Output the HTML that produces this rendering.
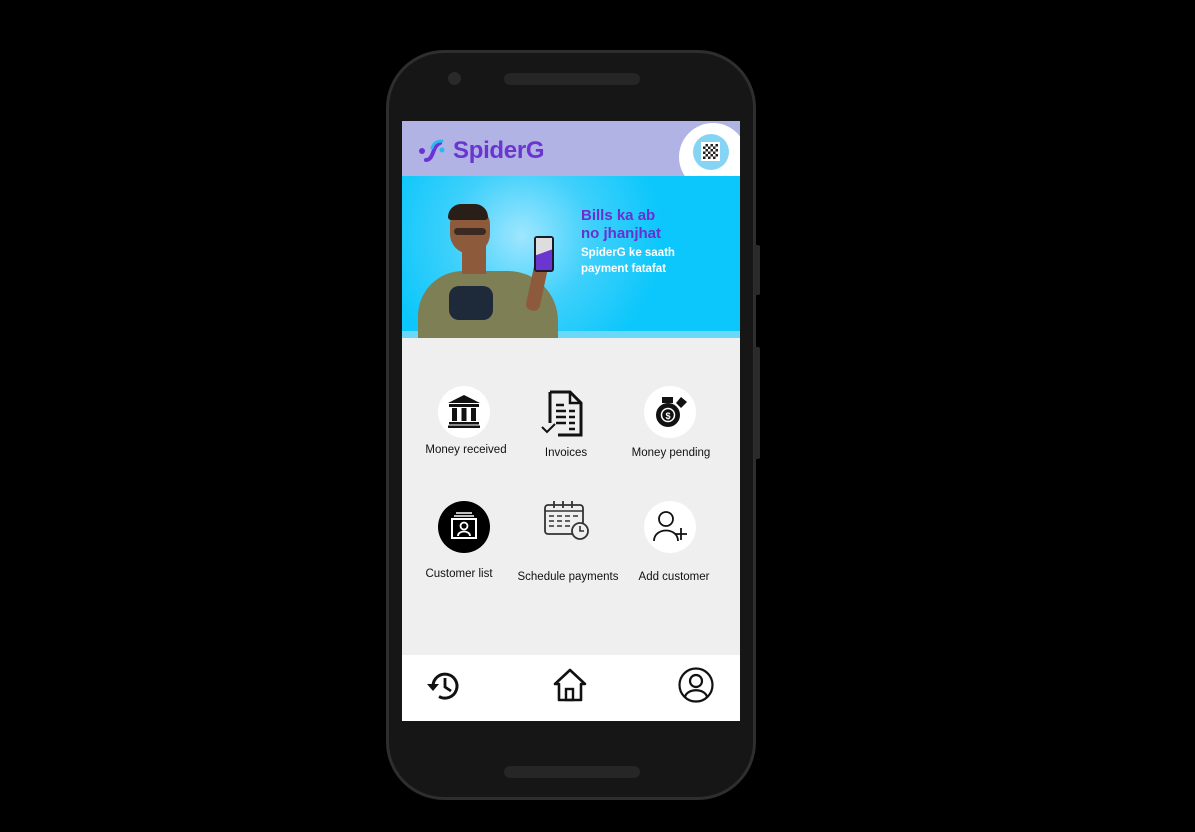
<!DOCTYPE html>
<html><head><meta charset="utf-8"><style>
*{margin:0;padding:0;box-sizing:border-box}
body{width:1195px;height:832px;background:#000;position:relative;overflow:hidden;font-family:"Liberation Sans",sans-serif}
.phone{position:absolute;left:386px;top:50px;width:370px;height:750px;background:#161616;border-radius:58px;border:3px solid #2e2e2e}
.btn{position:absolute;left:754px;width:6px;background:#2a2a2a;border-radius:0 2px 2px 0}
.screen{position:absolute;left:402px;top:121px;width:338px;height:600px;background:#efefef;overflow:hidden}
.hdr{position:absolute;left:0;top:0;width:338px;height:55px;background:#b0b3e4;overflow:hidden}
.banner{position:absolute;left:0;top:55px;width:338px;height:162px;background:radial-gradient(circle at 120px 60px,#9fe6ff 0,#3fd0fb 70px,#0cc7fb 140px);overflow:hidden}
.nav{position:absolute;left:0;top:534px;width:338px;height:66px;background:#fff}
.lbl{position:absolute;font-size:11.5px;color:#111;white-space:nowrap;transform:translateX(-50%)}
.circ{position:absolute;width:52px;height:52px;border-radius:50%;background:#fff}
</style></head><body>
<div class="phone"></div>
<div class="btn" style="top:245px;height:50px"></div>
<div class="btn" style="top:347px;height:112px"></div>
<div style="position:absolute;left:448px;top:72px;width:13px;height:13px;border-radius:50%;background:#2a2a2a"></div>
<div style="position:absolute;left:504px;top:73px;width:136px;height:12px;border-radius:6px;background:#262626"></div>
<div style="position:absolute;left:504px;top:766px;width:136px;height:12px;border-radius:6px;background:#262626"></div>
<div class="screen">
 <div class="hdr">
  <svg style="position:absolute;left:16px;top:17px" width="28" height="26" viewBox="0 0 28 26"><circle cx="4" cy="13" r="3" fill="#6b33d6"/><path d="M8 22 C16 22 14 8 22 5" stroke="#6b33d6" stroke-width="4" fill="none" stroke-linecap="round"/><path d="M14 10 C16 4 20 3 24 3" stroke="#2bb8f0" stroke-width="3" fill="none" stroke-linecap="round"/><circle cx="24" cy="12" r="2.5" fill="#2bb8f0"/></svg>
  <div style="position:absolute;left:51px;top:16px;font-size:24px;font-weight:bold;color:#6b35cf;letter-spacing:-0.3px">SpiderG</div>
  <div style="position:absolute;left:277px;top:2px;width:68px;height:68px;border-radius:50%;background:#fff"></div>
  <div style="position:absolute;left:291px;top:13px;width:36px;height:36px;border-radius:50%;background:#86d4f4"></div>
  <div style="position:absolute;left:299px;top:21px;width:19px;height:19px;background:#fff;padding:2px"><div style="width:15px;height:15px;background:conic-gradient(#222 25%,#fff 0 50%,#222 0 75%,#fff 0);background-size:5px 5px"></div></div>
 </div>
 <div class="banner">
  <div style="position:absolute;left:0;top:155px;width:338px;height:7px;background:#6ad8f6"></div>
  <div style="position:absolute;left:16px;top:95px;width:140px;height:80px;background:#7e7f55;border-radius:45px 50px 0 0"></div>
  <div style="position:absolute;left:60px;top:68px;width:24px;height:30px;background:#8d5a3c"></div>
  <div style="position:absolute;left:48px;top:32px;width:40px;height:46px;background:#8d5a3c;border-radius:16px 16px 20px 20px"></div>
  <div style="position:absolute;left:46px;top:28px;width:40px;height:16px;background:#2a1e18;border-radius:18px 18px 4px 4px"></div>
  <div style="position:absolute;left:52px;top:52px;width:32px;height:7px;background:#3a2a22;border-radius:4px"></div>
  <div style="position:absolute;left:47px;top:110px;width:44px;height:34px;background:#1e2a3a;border-radius:10px"></div>
  <div style="position:absolute;left:128px;top:85px;width:14px;height:50px;background:#8d5a3c;border-radius:6px;transform:rotate(12deg)"></div>
  <div style="position:absolute;left:132px;top:60px;width:20px;height:36px;background:#1a1a2a;border-radius:3px"></div>
  <div style="position:absolute;left:134px;top:62px;width:16px;height:32px;background:linear-gradient(160deg,#ddd 45%,#6b35cf 46%)"></div>
  <div style="position:absolute;left:179px;top:31px;font-size:15px;font-weight:bold;color:#6b2fd0;line-height:18px">Bills ka ab<br>no jhanjhat</div>
  <div style="position:absolute;left:179px;top:69px;font-size:11.5px;font-weight:bold;color:#fff;line-height:16px">SpiderG ke saath<br>payment fatafat</div>
 </div>
 <!-- row 1 -->
 <div class="circ" style="left:36px;top:265px"></div>
 <svg style="position:absolute;left:44px;top:272px" width="36" height="36" viewBox="0 0 36 36"><path d="M18 2 L34 10 L2 10 Z" fill="#111"/><rect x="3" y="11" width="30" height="3" fill="#111"/><rect x="6" y="15" width="5" height="13" fill="#111"/><rect x="15.5" y="15" width="5" height="13" fill="#111"/><rect x="25" y="15" width="5" height="13" fill="#111"/><rect x="3" y="29" width="30" height="2.5" fill="#111"/><rect x="2" y="32.5" width="32" height="2.5" fill="#111"/></svg>
 <div class="lbl" style="left:64px;top:323px">Money received</div>
 <svg style="position:absolute;left:138px;top:268px" width="44" height="50" viewBox="0 0 44 50"><path d="M10 3 H30 L41 14 V46 H18" stroke="#111" stroke-width="3" fill="none"/><path d="M10 3 V34" stroke="#111" stroke-width="3"/><path d="M30 3 V14 H41" stroke="#111" stroke-width="2.5" fill="none"/><path d="M16 16h8M16 22h10M29 22h6M16 28h10M29 28h6M16 34h10M29 34h6M29 40h6" stroke="#111" stroke-width="2.5"/><path d="M2 38 L7 43 L15 35" stroke="#111" stroke-width="2" fill="none"/></svg>
 <div class="lbl" style="left:164px;top:326px">Invoices</div>
 <div class="circ" style="left:242px;top:265px"></div>
 <svg style="position:absolute;left:252px;top:272px" width="34" height="36" viewBox="0 0 34 36"><circle cx="14" cy="22" r="12" fill="#111"/><rect x="8" y="4" width="11" height="6" fill="#111"/><path d="M22 10 l5 -6 l6 5 l-6 6z" fill="#111"/><circle cx="14" cy="22" r="6.5" fill="none" stroke="#fff" stroke-width="1.5"/><text x="14" y="26" font-size="9" font-weight="bold" fill="#fff" text-anchor="middle" font-family="Liberation Sans">$</text></svg>
 <div class="lbl" style="left:269px;top:326px">Money pending</div>
 <!-- row 2 -->
 <div class="circ" style="left:36px;top:380px;background:#000"></div>
 <svg style="position:absolute;left:46px;top:388px" width="32" height="34" viewBox="0 0 32 34"><path d="M8 4h16M6 7h20" stroke="#fff" stroke-width="1.5"/><rect x="4" y="10" width="24" height="19" fill="none" stroke="#fff" stroke-width="2"/><circle cx="16" cy="17" r="3.5" fill="none" stroke="#fff" stroke-width="1.8"/><path d="M10 27 C10 21 22 21 22 27" fill="none" stroke="#fff" stroke-width="1.8"/></svg>
 <div class="lbl" style="left:57px;top:447px">Customer list</div>
 <svg style="position:absolute;left:141px;top:378px" width="48" height="42" viewBox="0 0 48 42"><rect x="2" y="6" width="38" height="29" rx="3" fill="none" stroke="#333" stroke-width="1.8"/><path d="M2 12 H40" stroke="#333" stroke-width="1.5"/><path d="M11 2v7M20 2v7M29 2v7" stroke="#333" stroke-width="1.8"/><path d="M6 17h5M14 17h5M22 17h5M30 17h5M6 22h5M14 22h5M22 22h5M6 27h5M14 27h5M22 27h5" stroke="#333" stroke-width="1.6"/><circle cx="37" cy="32" r="8" fill="#efefef" stroke="#333" stroke-width="1.8"/><path d="M37 27v5h4" stroke="#333" stroke-width="1.6" fill="none"/></svg>
 <div class="lbl" style="left:166px;top:450px">Schedule payments</div>
 <div class="circ" style="left:242px;top:380px"></div>
 <svg style="position:absolute;left:249px;top:386px" width="40" height="40" viewBox="0 0 40 40"><circle cx="15" cy="12" r="7" fill="none" stroke="#111" stroke-width="1.8"/><path d="M3 34 C3 20 27 20 27 34" fill="none" stroke="#111" stroke-width="1.8"/><path d="M30 21v12M24 27h12" stroke="#111" stroke-width="1.8"/></svg>
 <div class="lbl" style="left:272px;top:450px">Add customer</div>
 <div class="nav">
  <svg style="position:absolute;left:22px;top:13px" width="40" height="36" viewBox="0 0 40 36"><path d="M9 18 A12 12 0 1 1 15 28.5" stroke="#111" stroke-width="3" fill="none"/><path d="M3 16 L9 23 L15 16 Z" fill="#111"/><path d="M21 10v9l6 4" stroke="#111" stroke-width="2.8" fill="none"/></svg>
  <svg style="position:absolute;left:150px;top:12px" width="36" height="36" viewBox="0 0 36 36"><path d="M3 17 L18 3 L33 17 H29 V33 H7 V17 Z" stroke="#111" stroke-width="2.6" fill="none" stroke-linejoin="round"/><rect x="14" y="22" width="7" height="11" fill="none" stroke="#111" stroke-width="2.4"/></svg>
  <svg style="position:absolute;left:276px;top:12px" width="36" height="36" viewBox="0 0 36 36"><circle cx="18" cy="18" r="16.5" stroke="#111" stroke-width="2.2" fill="none"/><circle cx="18" cy="14" r="6" stroke="#111" stroke-width="2.2" fill="none"/><path d="M7 30 C9 21 27 21 29 30" stroke="#111" stroke-width="2.2" fill="none"/></svg>
 </div>
</div>
</body></html>
